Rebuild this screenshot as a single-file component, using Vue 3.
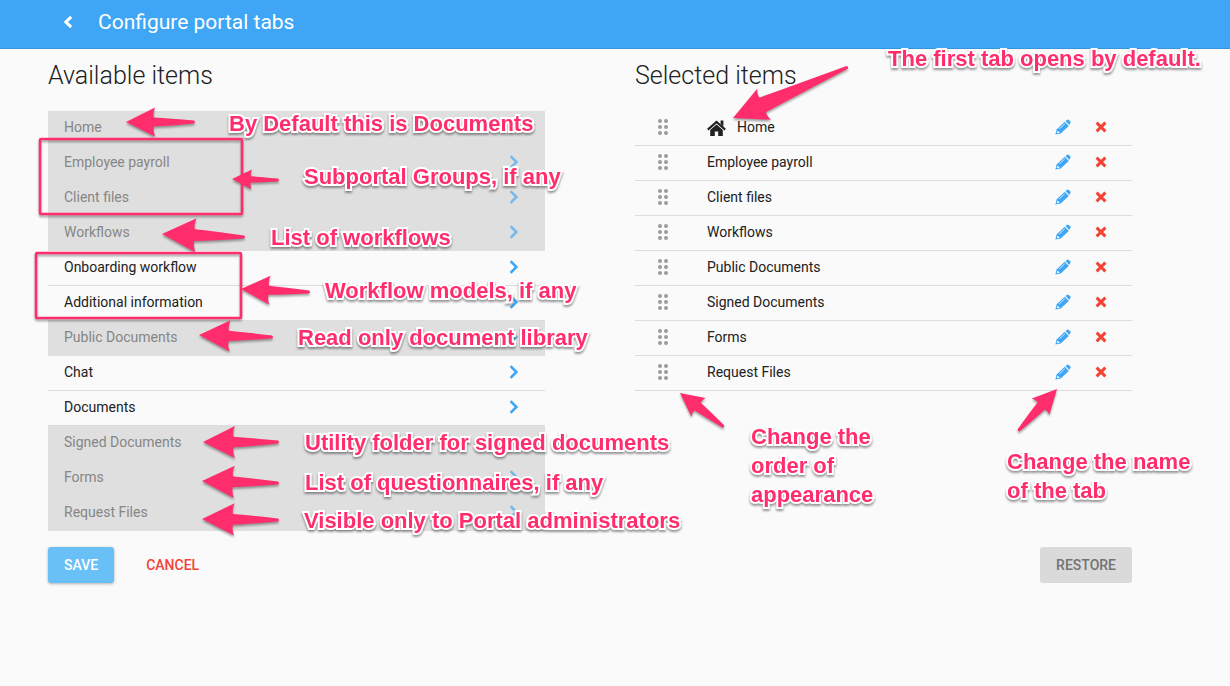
<script setup>
const available = [
  { name: 'Home', used: true },
  { name: 'Employee payroll', used: true },
  { name: 'Client files', used: true },
  { name: 'Workflows', used: true },
  { name: 'Onboarding workflow', used: false },
  { name: 'Additional information', used: false },
  { name: 'Public Documents', used: true },
  { name: 'Chat', used: false },
  { name: 'Documents', used: false },
  { name: 'Signed Documents', used: true },
  { name: 'Forms', used: true },
  { name: 'Request Files', used: true },
]

const selected = [
  'Home',
  'Employee payroll',
  'Client files',
  'Workflows',
  'Public Documents',
  'Signed Documents',
  'Forms',
  'Request Files',
]

const notes = [
  { x: 229, y: 109, lines: ['By Default this is Documents'] },
  { x: 304, y: 162, lines: ['Subportal Groups, if any'] },
  { x: 271, y: 223, lines: ['List of workflows'] },
  { x: 325, y: 276, lines: ['Workflow models, if any'] },
  { x: 298, y: 323, lines: ['Read only document library'] },
  { x: 305, y: 428, lines: ['Utility folder for signed documents'] },
  { x: 305, y: 468, lines: ['List of questionnaires, if any'] },
  { x: 304, y: 506, lines: ['Visible only to Portal administrators'] },
  { x: 888, y: 44, lines: ['The first tab opens by default.'] },
  { x: 751, y: 422, lines: ['Change the', 'order of', 'appearance'] },
  { x: 1007, y: 447, lines: ['Change the name', 'of the tab'] },
]

const frames = [
  { x: 40, y: 139, w: 202, h: 75 },
  { x: 36, y: 253, w: 205, h: 65 },
]

// tip x, tip y, tail x, tail y, shaft thickness relative to the head
const arrows = [
  [126, 122, 195, 122, 0.31],
  [232, 179, 279, 180, 0.31],
  [162, 234, 245, 237, 0.35],
  [241, 289, 310, 292, 0.31],
  [199, 335, 273, 337, 0.33],
  [203, 442, 279, 442, 0.33],
  [202, 481, 279, 483, 0.33],
  [202, 519, 279, 520, 0.33],
  [733, 118, 848, 67, 0.47],
  [680, 393, 724, 427, 0.42],
  [1057, 389, 1018, 431, 0.42],
].map(arrowPath)

function arrowPath([tx, ty, ex, ey, waist]) {
  const len = Math.hypot(ex - tx, ey - ty)
  const ux = (ex - tx) / len
  const uy = (ey - ty) / len
  const head = Math.min(len * 0.42, 34)
  const half = head / 2
  const p = (along, across) =>
    `${(tx + ux * along - uy * across).toFixed(1)} ${(ty + uy * along + ux * across).toFixed(1)}`
  return [
    `M${p(0, 0)}`,
    `L${p(head, -half)}`,
    `Q${p(head * 0.92, -half * 0.65)} ${p(head * 0.96, -half * waist)}`,
    `Q${p(head * 1.5, -half * waist * 0.8)} ${p(len - 1, -1.4)}`,
    `Q${p(len + 1, 0)} ${p(len - 1, 1.4)}`,
    `Q${p(head * 1.5, half * waist * 0.8)} ${p(head * 0.96, half * waist)}`,
    `Q${p(head * 0.92, half * 0.65)} ${p(head, half)}`,
    'Z',
  ].join(' ')
}
</script>

<template>
  <div class="page">
    <header class="bar">
      <button class="icon-btn back" type="button" aria-label="Back">
        <svg width="10" height="14" viewBox="0 0 10 14"><path d="M8.2 1.8 2.8 7l5.4 5.2" fill="none" stroke="#fff" stroke-width="3" /></svg>
      </button>
      <h1>Configure portal tabs</h1>
    </header>

    <main class="content">
      <div class="columns">
        <section>
          <h2>Available items</h2>
          <ul class="list">
            <li v-for="item in available" :key="item.name" class="row source" :class="{ used: item.used }">
              <span>{{ item.name }}</span>
              <button class="icon-btn" type="button" :disabled="item.used" :aria-label="`Add ${item.name}`">
                <svg width="10" height="14" viewBox="0 0 10 14"><path d="M1.6 1.2 7.4 7l-5.8 5.8" fill="none" stroke="#3ea6f4" stroke-width="2.6" /></svg>
              </button>
            </li>
          </ul>
        </section>

        <section>
          <h2>Selected items</h2>
          <ul class="list">
            <li v-for="name in selected" :key="name" class="row target">
              <button class="icon-btn grip" type="button" :aria-label="`Move ${name}`">
                <svg width="12" height="18" viewBox="0 0 12 18" fill="#9b9b9b">
                  <circle cx="3" cy="3" r="2" /><circle cx="9" cy="3" r="2" />
                  <circle cx="3" cy="9" r="2" /><circle cx="9" cy="9" r="2" />
                  <circle cx="3" cy="15" r="2" /><circle cx="9" cy="15" r="2" />
                </svg>
              </button>
              <span class="label">
                <svg v-if="name === 'Home'" class="house" width="20" height="20" viewBox="0 0 20 20">
                  <path d="M.8 12.6 9.5 5l8.7 7.6" fill="none" stroke="#212121" stroke-width="2.1" />
                  <path d="M13.6 3.6h2.8V9.4l-2.8-2.5z" fill="#212121" />
                  <path d="M9.5 7.6 3.2 13.1V19h4.6v-4.6h3.4V19h4.6v-5.9z" fill="#212121" />
                </svg>
                {{ name }}
              </span>
              <button class="icon-btn" type="button" :aria-label="`Rename ${name}`">
                <svg width="16" height="16" viewBox="0 0 16 16">
                  <path d="M9.7 2.8 1.6 10.4.4 15.6l5.3-1.1 8.1-7.6z" fill="#3ea6f4" />
                  <path d="M10.5 2.1 11.8.9q1-.9 2 0l1.4 1.4q.9 1 0 2l-.9 1.7z" fill="#3ea6f4" />
                  <path d="M4.3 9.9 9.8 4.7" stroke="#fafafa" stroke-width=".8" />
                  <path d="m2.3 11.7-.5 1.7.9.8 1.7-.4-.1-1.1-1.1-.1z" fill="#fafafa" />
                </svg>
              </button>
              <button class="icon-btn" type="button" :aria-label="`Remove ${name}`">
                <svg width="12" height="12" viewBox="0 0 12 12"><path d="m1.6 1.6 8.8 8.8m0-8.8-8.8 8.8" stroke="#f44336" stroke-width="2.9" /></svg>
              </button>
            </li>
          </ul>
        </section>
      </div>

      <div class="actions">
        <button class="btn save" type="button">SAVE</button>
        <button class="btn cancel" type="button">CANCEL</button>
        <button class="btn restore" type="button">RESTORE</button>
      </div>
    </main>

    <div class="overlay">
      <svg class="marks" width="100%" height="100%" aria-hidden="true">
        <rect v-for="(f, i) in frames" :key="'f' + i" :x="f.x" :y="f.y" :width="f.w" :height="f.h" rx="1" fill="none" stroke="#ff2d6b" stroke-width="2.5" />
        <path v-for="(d, i) in arrows" :key="'a' + i" :d="d" fill="#ff2d6b" />
      </svg>
      <p v-for="(n, i) in notes" :key="i" class="note" :style="{ left: n.x + 'px', top: n.y + 'px' }">
        <span v-for="line in n.lines" :key="line">{{ line }}</span>
      </p>
    </div>
  </div>
</template>

<style>
body {
  margin: 0;
  background: #fafafa;
}
</style>

<style scoped>
.page {
  position: relative;
  min-height: 100vh;
  overflow: hidden;
  font-family: Roboto, sans-serif;
  font-size: 14px;
  color: #212121;
}

.bar {
  display: flex;
  align-items: center;
  gap: 20px;
  box-sizing: border-box;
  height: 49px;
  padding: 0 58px 4px;
  background: #3ea6f4;
  border-bottom: 1px solid #3594dc;
  color: #fff;
}

h1 {
  margin: 0;
  font-size: 21px;
  font-weight: 400;
  line-height: 28px;
}

h2 {
  margin: 0 0 20px;
  font-size: 25px;
  font-weight: 300;
  line-height: 30px;
}

.content {
  padding: 12px 98px 24px 48px;
}

.columns {
  display: grid;
  grid-template-columns: 1fr 1fr;
  gap: 90px;
}

.list {
  margin: 0;
  padding: 0;
  list-style: none;
}

.row {
  display: flex;
  align-items: center;
  box-sizing: border-box;
  height: 35px;
  padding-bottom: 2px;
  border-bottom: 1px solid #ddd;
}

.source {
  justify-content: space-between;
  padding-left: 16px;
  padding-right: 21px;
}

.source.used {
  background: #dfdfdf;
  border-color: #dfdfdf;
  color: #868686;
}

.source.used svg {
  opacity: 0.65;
}

.target {
  padding-left: 18px;
  padding-right: 21px;
  gap: 18px;
}

.label {
  display: flex;
  align-items: center;
  gap: 10px;
  flex: 1;
  padding-left: 16px;
}

.grip {
  margin-top: 2px;
}

.icon-btn {
  display: flex;
  align-items: center;
  justify-content: center;
  min-width: 20px;
  height: 20px;
  margin: 0;
  padding: 0;
  border: 0;
  background: none;
  cursor: pointer;
}

.actions {
  display: flex;
  gap: 16px;
  margin-top: 16px;
}

.btn {
  height: 36px;
  padding: 0 16px;
  border: 0;
  border-radius: 3px;
  background: none;
  font: 500 14px Roboto, sans-serif;
  cursor: pointer;
}

.save {
  background: #69c0f7;
  color: #fff;
  box-shadow: 0 1px 3px rgba(0, 0, 0, 0.3);
}

.cancel {
  color: #f44336;
}

.restore {
  margin-left: auto;
  background: #dadada;
  color: #737373;
}

.overlay {
  position: absolute;
  inset: 0;
  pointer-events: none;
}

.marks {
  display: block;
  filter: drop-shadow(0 2px 1px rgba(0, 0, 0, 0.35));
}

.note {
  position: absolute;
  margin: 0;
  font: 700 22px/29px "Liberation Sans", Arial, sans-serif;
  color: #ff2d6b;
  white-space: nowrap;
  -webkit-text-stroke: 4px #fff;
  paint-order: stroke fill;
  stroke-linejoin: round;
  filter: drop-shadow(0 2px 1px rgba(0, 0, 0, 0.4));
}

.note span {
  display: block;
}
</style>
